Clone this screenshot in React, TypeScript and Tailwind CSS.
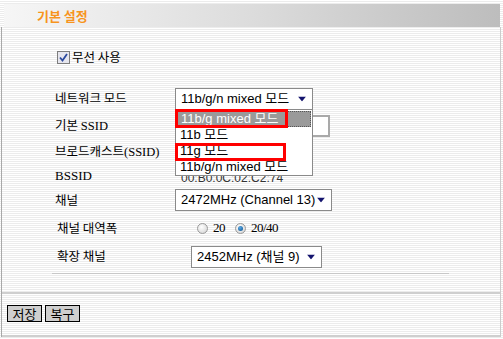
import * as React from 'react';

const KR = "font-['Noto_Sans_CJK_KR',sans-serif]";
const SANS = "font-['Liberation_Sans','Noto_Sans_CJK_KR',sans-serif]";
const SERIF = "font-['Liberation_Serif','Noto_Sans_CJK_KR',serif]";

function Arrow() {
  return (
    <svg width="8" height="5" viewBox="0 0 8 5" className="absolute right-[6px] top-1/2 -translate-y-1/2">
      <path d="M0 0 H8 L4 5 Z" fill="#14146e" />
    </svg>
  );
}

function Select({ value, width, children }: { value: string; width: string; children?: React.ReactNode }) {
  return (
    <div className={`relative h-[22px] ${width} border border-[#8a8a8a] bg-white ${SANS} text-[13px] text-black leading-[20px] pl-[5px]`}>
      {value}
      <Arrow />
      {children}
    </div>
  );
}

function Radio({ checked }: { checked?: boolean }) {
  return (
    <span className="inline-flex h-[11px] w-[11px] items-center justify-center rounded-full border border-[#9a9a9a] bg-[radial-gradient(circle_at_40%_35%,#ffffff,#d0d0d0)]">
      {checked && <span className="h-[5px] w-[5px] rounded-full bg-[radial-gradient(circle_at_40%_35%,#5aa9e6,#0a4f8a)]" />}
    </span>
  );
}

function Row({ label, className, children }: { label: React.ReactNode; className: string; children?: React.ReactNode }) {
  return (
    <div className={`flex items-center pl-[53px] ${className}`}>
      <div className={`w-[120px] shrink-0 text-[12.5px] text-black ${KR}`}>{label}</div>
      {children}
    </div>
  );
}

export default function App() {
  const options = ['11b/g mixed 모드', '11b 모드', '11g 모드', '11b/g/n mixed 모드'];

  return (
    <div className="relative h-[339px] w-[503px] overflow-hidden bg-[repeating-linear-gradient(to_bottom,#ffffff_0px,#ffffff_1px,#ececec_1px,#ececec_2px)]">
      <div className="h-[4px]" />
      <div className="ml-[4px] mr-[3px] flex h-[23px] items-center bg-gradient-to-r from-[#f6f6f6] via-[#dcdcdc] to-[#bdbdbd] pl-[33px]">
        <span className={`text-[13px] font-bold text-[#f7941d] ${KR}`}>기본 설정</span>
      </div>

      <div className="ml-[1px] w-[500px] border-l border-r border-l-[#a8a8a8] border-r-[#cccccc]">
        <div className="relative h-[267px] border-b-2 border-[#cfcfcf] pt-[20px]">
          {/* 무선 사용 */}
          <div className={`flex h-[20px] items-center pl-[55px] ${KR} text-[12.5px]`}>
            <span className="mr-[2px] flex h-[13px] w-[13px] items-center justify-center border border-[#7d7d7d] bg-[#e6e6ee]">
              <svg width="9" height="9" viewBox="0 0 9 9">
                <path d="M1 4.5 L3.5 7.5 L8 1" fill="none" stroke="#2c4a9e" strokeWidth="1.8" />
              </svg>
            </span>
            무선 사용
          </div>

          <Row label="네트워크 모드" className="mt-[21px] h-[21px]">
            <Select value="11b/g/n mixed 모드" width="w-[138px]">
              <div className={`absolute left-[-1px] top-[20px] z-10 h-[67px] w-[138px] border border-[#8a8a8a] bg-white ${SANS} text-[13px] leading-[16px]`}>
                {options.map((o, i) => (
                  <div
                    key={o}
                    className={
                      i === 0
                        ? 'mx-[1px] mt-[1px] h-[16px] border border-dotted border-[#555] bg-[#9a9a9a] pl-[3px] text-white leading-[14px]'
                        : 'h-[16px] pl-[4px] text-black'
                    }
                  >
                    {o}
                  </div>
                ))}
                <div className="absolute left-[-1px] top-[-1px] h-[19px] w-[113px] border-[3px] border-[#ff0000]" />
                <div className="absolute left-[-1px] top-[33px] h-[18px] w-[111px] border-[3px] border-[#ff0000]" />
              </div>
            </Select>
          </Row>

          <Row label={<>기본 <span className={SERIF}>SSID</span></>} className="mt-[6px] h-[22px]">
            <div className="h-[22px] w-[155px] border-2 border-[#a9a9a9] bg-white" />
          </Row>

          <Row label={<>브로드캐스트<span className={SERIF}>(SSID)</span></>} className="mt-[4px] h-[22px]" />

          <Row label={<span className={`${SERIF} text-[13px]`}>BSSID</span>} className="mt-[2px] h-[22px]">
            <span className={`${SANS} mt-[4px] pl-[6px] text-[12px] text-[#333]`}>00:B0:0C:02:C2:74</span>
          </Row>

          <Row label="채널" className="mt-[2px] h-[22px]">
            <Select value="2472MHz (Channel 13)" width="w-[157px]" />
          </Row>

          <div className={`mt-[7px] flex h-[20px] items-center pl-[55px]`}>
            <div className={`w-[140px] shrink-0 text-[12.5px] ${KR}`}>채널 대역폭</div>
            <Radio />
            <span className={`ml-[5px] mr-[10px] text-[13px] tracking-[-0.5px] ${SERIF}`}>20</span>
            <Radio checked />
            <span className={`ml-[5px] text-[13px] tracking-[-0.5px] ${SERIF}`}>20/40</span>
          </div>

          <div className="mt-[8px] flex h-[21px] items-center pl-[55px]">
            <div className={`w-[134px] shrink-0 text-[12.5px] ${KR}`}>확장 채널</div>
            <Select value="2452MHz (채널 9)" width="w-[131px]" />
          </div>

          <div className="ml-[50px] mt-[6px] h-px w-[397px] bg-[#c8c8c8]" />
        </div>

        <div className="h-[43px] border-b-2 border-[#cfcfcf] pl-[5px] pt-[11px]">
          <div className="flex gap-[3px]">
            <button className={`h-[17px] w-[35px] border border-black bg-[#cfcfcf] text-[13px] leading-[15px] text-black ${KR}`}>저장</button>
            <button className={`h-[17px] w-[35px] border border-black bg-[#cfcfcf] text-[13px] leading-[15px] text-black ${KR}`}>복구</button>
          </div>
        </div>
      </div>
    </div>
  );
}
